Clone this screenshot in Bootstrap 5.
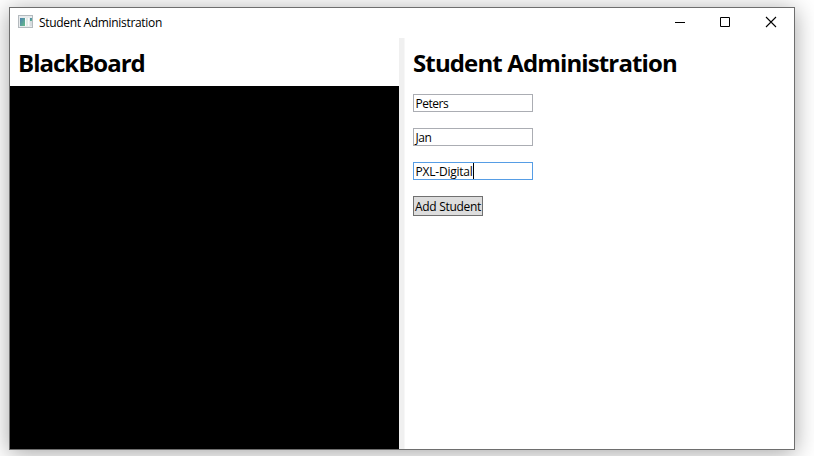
<!DOCTYPE html>
<html lang="en">
<head>
<meta charset="utf-8">
<title>Student Administration</title>
<link href="https://cdn.jsdelivr.net/npm/bootstrap@5.3.0/dist/css/bootstrap.min.css" rel="stylesheet">
<style>
body{font-family:"Open Sans","Noto Sans",sans-serif;font-size:12px;line-height:16px;color:#000;background:#fff;height:456px;padding:7px 0 0 9px}
.app-window{width:786px;height:443px;border:1px solid #6e6e6e;box-shadow:0 3px 22px rgba(0,0,0,.36)}
.titlebar{height:30px;padding-left:8px}
.app-icon{margin-bottom:2px}
.app-title{margin-left:6px;letter-spacing:-.32px}
.win-button{width:46px;height:30px}
.left-pane{width:389px}
.splitter{width:6px;background:#f0f0f0;border-right:1px solid #f7f7f7}
.heading{font-size:24px;line-height:32px;font-weight:700;height:48px;padding:9px 0 0 8px;margin:0;white-space:nowrap}
.h-board{letter-spacing:-1px}
.h-admin{letter-spacing:-.87px}
.fields{gap:16px;padding:8px 0 0 8px}
.field{width:120px;height:18px;padding:1px 0 0 1.5px;border:1px solid #abadb3;border-radius:0;font-size:12px;line-height:16px;color:#000;letter-spacing:-.5px;white-space:nowrap}
.field.focused{border-color:#569de5;letter-spacing:-.22px}
.caret{width:1px;height:16px;background:#000;margin-top:-1px}
.add-btn{width:70px;height:20px;padding:0;border:1px solid #707070;border-radius:0;background:#ddd;font-size:12px;line-height:19px;color:#000;letter-spacing:-.28px;white-space:nowrap}
</style>
<script src="https://cdn.jsdelivr.net/npm/bootstrap@5.3.0/dist/js/bootstrap.bundle.min.js"></script>
</head>
<body class="overflow-hidden">
<div class="app-window d-flex flex-column bg-white">
  <header class="titlebar d-flex align-items-center flex-shrink-0">
    <svg class="app-icon" width="15" height="14" viewBox="0 0 15 14" shape-rendering="crispEdges">
      <defs><linearGradient id="pane" x2="1" y2="1"><stop stop-color="#4a7fb0"/><stop offset="1" stop-color="#66bd88"/></linearGradient></defs>
      <path fill="#b4babe" d="M0 0h15v13H0z"/><path fill="#e8ebed" d="M1 1h13v11H1z"/>
      <path fill="url(#pane)" d="M2 3h5v8H2z"/><path fill="#fafafa" d="M7 3h4v8H7z"/>
      <path fill="#e2ebe8" d="M8 3h2v8H8z"/>
      <path fill="url(#pane)" d="M12 3h2v3h-2z"/><path fill="#d6dcdf" d="M12 6h2v5h-2z"/>
    </svg>
    <span class="app-title">Student Administration</span>
    <div class="d-flex ms-auto">
      <svg class="win-button" viewBox="0 0 46 30"><path d="M19 14.5h10" stroke="#000"/></svg>
      <svg class="win-button" viewBox="0 0 46 30"><path d="M18.5 9.5h9v9h-9z" fill="none" stroke="#000"/></svg>
      <svg class="win-button" viewBox="0 0 46 30"><path d="M18 9l10 10M28 9L18 19" stroke="#000" stroke-width="1.1"/></svg>
    </div>
  </header>
  <main class="d-flex flex-grow-1">
    <section class="left-pane d-flex flex-column">
      <h1 class="heading"><span class="h-board">BlackBoard</span></h1>
      <div class="bg-black flex-grow-1"></div>
    </section>
    <div class="splitter"></div>
    <section class="flex-grow-1">
      <h1 class="heading"><span class="h-admin">Student Administration</span></h1>
      <div class="fields d-flex flex-column">
        <div class="form-control field">Peters</div>
        <div class="form-control field">Jan</div>
        <div class="form-control field focused d-flex"><span>PXL-Digital</span><i class="caret"></i></div>
        <button class="btn add-btn" type="button">Add Student</button>
      </div>
    </section>
  </main>
</div>
</body>
</html>
